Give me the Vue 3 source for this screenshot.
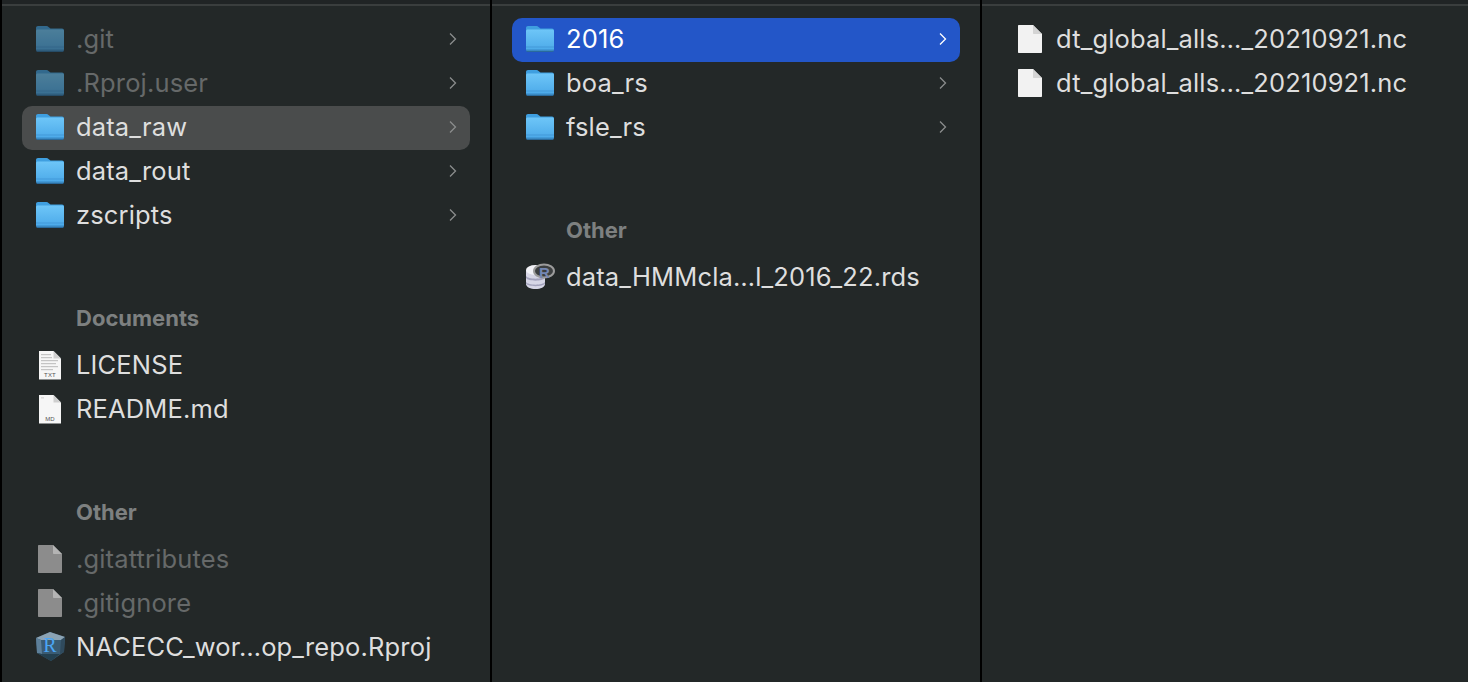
<template>
  <div class="finder">
    <div class="column" v-for="(col, i) in columns" :key="i" :class="'col-' + i">
      <template v-for="(group, g) in col">
        <div v-if="group.title" class="group-title" :key="'t' + g">{{ group.title }}</div>
        <div
          v-for="item in group.items"
          :key="item.name"
          class="row"
          :class="{ dim: item.dim, hover: item.hover, active: item.active }"
        >
          <!-- 文件夹图标 -->
          <svg v-if="item.type === 'folder'" class="icon folder" viewBox="0 0 30 30">
            <path d="M2 7V3C2 1.8 2.8 1 4 1H12.5C13.4 1 13.9 1.3 14.5 1.9L16.5 3.6H28C29.3 3.6 30 4.4 30 5.6V8Z" fill="#3f9fe0" />
            <path d="M2 6C2 5 2.8 4.4 4 4.4H28C29.2 4.4 30 5 30 6V24.5C30 25.7 29.2 26.4 28 26.4H4C2.8 26.4 2 25.7 2 24.5Z" fill="url(#folderFill)" />
            <rect x="2" y="21.6" width="28" height="0.8" fill="#3f95d4" />
            <rect x="2" y="24" width="28" height="0.8" fill="#3f95d4" />
            <path d="M2 25.4H30V25C30 26.4 29.2 27 28 27H4C2.8 27 2 26.4 2 25Z" fill="#2a6a9c" />
          </svg>
          <!-- 普通文档图标 -->
          <svg v-else-if="item.type === 'doc' || item.type === 'gray'" class="icon" viewBox="0 0 30 30">
            <path d="M4 1C4 .4 4.4 0 5 0H19L28 9V27C28 27.6 27.6 28 27 28H5C4.4 28 4 27.6 4 27Z" :fill="item.type === 'gray' ? '#8c8c8c' : '#f2f2f2'" />
            <path d="M19 0V8C19 8.6 19.4 9 20 9H28Z" :fill="item.type === 'gray' ? '#b4b4b4' : '#d4d4d4'" />
          </svg>
          <!-- TXT / MD 图标 -->
          <svg v-else-if="item.type === 'txt' || item.type === 'md'" class="icon" viewBox="0 0 30 30">
            <path d="M5 0H19.5L27 7.5V28.5H5Z" fill="#f6f6f6" />
            <path d="M19.5 0V7.5H27Z" fill="#cfcfcf" />
            <g v-if="item.type === 'txt'" fill="#c4c4c4">
              <rect x="7" y="3" width="10" height="1.2" />
              <rect x="7" y="6" width="11" height="1.2" />
              <rect x="7" y="9" width="17" height="1.2" />
              <rect x="7" y="12" width="15" height="1.2" />
              <rect x="7" y="15" width="17" height="1.2" />
              <rect x="7" y="18" width="12" height="1.2" />
            </g>
            <rect v-else x="7" y="2.5" width="3" height="0.8" fill="#c4c4c4" />
            <text x="16" y="26" text-anchor="middle" class="badge">{{ item.type.toUpperCase() }}</text>
          </svg>
          <!-- Rproj 图标 -->
          <svg v-else-if="item.type === 'rproj'" class="icon" viewBox="0 0 30 30">
            <path d="M16 -1L31 4L30 19L17 28L3 20L2 5Z" fill="#3a5b72" />
            <path d="M2 5L16 -1L31 4L27 7L7 7Z" fill="#8ba3b4" />
            <path d="M2 5L7 7L8 21L3 20Z" fill="#5d7f99" />
            <path d="M27 7L31 4L30 19L26 21Z" fill="#2f4a5d" />
            <path d="M3 20L8 21L26 21L17 28Z" fill="#24404f" />
            <text x="16" y="19" text-anchor="middle" class="r-letter">R</text>
          </svg>
          <!-- rds 图标 -->
          <svg v-else class="icon" viewBox="0 0 30 30">
            <path d="M2 7V21C2 24 6.5 26 11.5 26S21 24 21 21V7Z" fill="#d6d6e6" />
            <path d="M2 13C4 16.5 19 16.5 21 13V15C19 18.5 4 18.5 2 15Z" fill="#a2a2bc" />
            <path d="M2 19C4 22.5 19 22.5 21 19V20.5C19 24 4 24 2 20.5Z" fill="#a2a2bc" />
            <ellipse cx="11.5" cy="7" rx="9.5" ry="5" fill="#f2f2f7" />
            <ellipse cx="20" cy="8" rx="10" ry="6.5" fill="#3c3f40" stroke="#9c9c9c" stroke-width="2" />
            <text x="20.5" y="15" text-anchor="middle" class="rds-letter">R</text>
          </svg>
          <span class="name">{{ item.name }}</span>
          <svg v-if="item.type === 'folder'" class="chev" viewBox="0 0 10 14">
            <path d="M2 1.5L7.5 7L2 12.5" fill="none" stroke="currentColor" stroke-width="1.3" />
          </svg>
        </div>
      </template>
    </div>
    <!-- 共享渐变定义 -->
    <svg width="0" height="0" class="defs">
      <defs>
        <linearGradient id="folderFill" x1="0" y1="0" x2="0" y2="1">
          <stop offset="0" stop-color="#6ec6f8" />
          <stop offset="1" stop-color="#4aa8e8" />
        </linearGradient>
      </defs>
    </svg>
  </div>
</template>

<script setup>
const columns = [
  [
    {
      items: [
        { name: '.git', type: 'folder', dim: true },
        { name: '.Rproj.user', type: 'folder', dim: true },
        { name: 'data_raw', type: 'folder', hover: true },
        { name: 'data_rout', type: 'folder' },
        { name: 'zscripts', type: 'folder' }
      ]
    },
    {
      title: 'Documents',
      items: [
        { name: 'LICENSE', type: 'txt' },
        { name: 'README.md', type: 'md' }
      ]
    },
    {
      title: 'Other',
      items: [
        { name: '.gitattributes', type: 'gray', dim: true },
        { name: '.gitignore', type: 'gray', dim: true },
        { name: 'NACECC_wor…op_repo.Rproj', type: 'rproj' }
      ]
    }
  ],
  [
    {
      items: [
        { name: '2016', type: 'folder', active: true },
        { name: 'boa_rs', type: 'folder' },
        { name: 'fsle_rs', type: 'folder' }
      ]
    },
    {
      title: 'Other',
      items: [{ name: 'data_HMMcla…l_2016_22.rds', type: 'rds' }]
    }
  ],
  [
    {
      items: [
        { name: 'dt_global_alls…_20210921.nc', type: 'doc' },
        { name: 'dt_global_alls…_20210921.nc ', type: 'doc' }
      ]
    }
  ]
]
</script>

<style>
html,
body {
  margin: 0;
  background: #232828;
  overflow: hidden;
}
</style>

<style scoped>
.finder {
  display: grid;
  grid-template-columns: 492px 490px 1fr;
  height: 682px;
  box-sizing: border-box;
  font-family: 'Inter', 'Liberation Sans', sans-serif;
  font-size: 25.5px;
  letter-spacing: 0.15px;
  color: #dedede;
}

/* 顶部的窄条和分隔线画在列背景里 */
.column {
  border-right: 2px solid #000;
  padding: 18px 20px 0;
  box-sizing: border-box;
  min-width: 0;
  background: linear-gradient(#202425 0 4px, #3a3e3e 4px 6px, #232828 6px);
}

.col-0 {
  border-left: 2px solid #000;
}

.col-2 {
  border-right: 0;
}

.row {
  height: 44px;
  display: flex;
  align-items: center;
  padding: 0 12px;
  border-radius: 10px;
  white-space: nowrap;
}

.icon {
  width: 30px;
  height: 30px;
  flex: none;
  margin-right: 12px;
  overflow: visible;
}

.name {
  flex: 1;
  padding-bottom: 4px;
}

.chev {
  width: 10px;
  height: 14px;
  flex: none;
  margin-bottom: 2px;
  color: #8b8d8d;
}

.dim .name {
  color: #666969;
}

.dim .folder {
  opacity: 0.55;
}

.hover {
  background: #4a4c4c;
}

.active {
  background: #2356c8;
  color: #fff;
}

.active .chev {
  color: #fff;
}

.group-title {
  margin: 59px 0 0;
  height: 47px;
  line-height: 42px;
  padding-left: 54px;
  font-size: 22px;
  font-weight: 700;
  letter-spacing: 0;
  color: #7d8080;
}

.badge {
  font-family: 'Liberation Sans', sans-serif;
  font-size: 6px;
  fill: #555;
}

.r-letter {
  font-family: 'Liberation Serif', serif;
  font-size: 20px;
  fill: #4aa6f5;
}

.rds-letter {
  font-family: 'Liberation Sans', sans-serif;
  font-size: 15px;
  font-weight: 700;
  fill: #7487b4;
}

.defs {
  position: absolute;
}
</style>
